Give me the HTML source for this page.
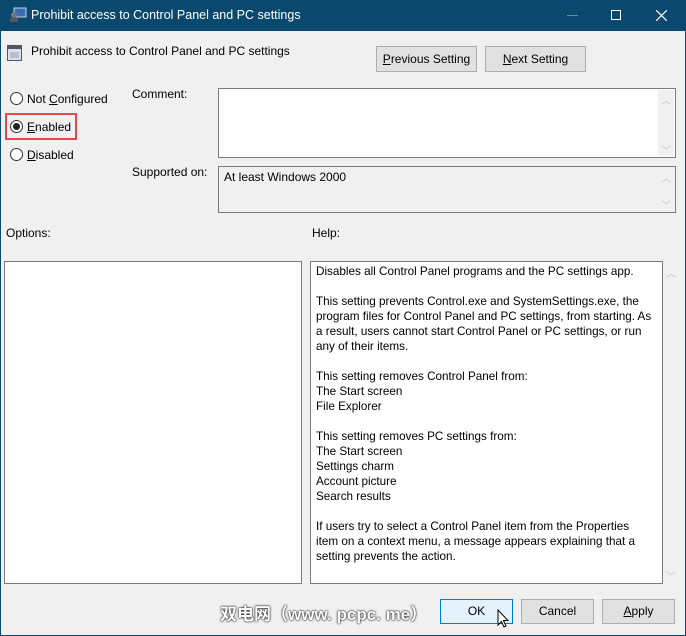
<!DOCTYPE html>
<html><head><style>
*{margin:0;padding:0;box-sizing:border-box}
body{width:686px;height:636px;overflow:hidden;background:#f0f0f0;font-family:"Liberation Sans","Noto Sans CJK SC",sans-serif;font-size:12px;color:#000;position:relative}
.a{position:absolute}
#frame{left:0;top:0;width:686px;height:636px;border:1px solid #0b4a6f;border-top:none}
#title{left:0;top:0;width:686px;height:31px;background:#0b486e;color:#fff;font-size:12.5px}
.btn{position:absolute;background:#e1e1e1;border:1px solid #adadad;text-align:center;line-height:23px}
.box{position:absolute;background:#fff;border:1px solid #7a7a7a}
.radio{position:absolute;width:13px;height:13px;border:1px solid #333;border-radius:50%;background:#fff}
u{text-decoration:underline}
.sb{position:absolute;color:#c0c0c0;font-size:10px}
</style></head><body>
<div class="a" id="title">
 <svg class="a" style="left:9px;top:7px" width="18" height="16"><rect x="5" y="1" width="12" height="9" fill="#3a6fb5" stroke="#ccd" /><circle cx="5" cy="8" r="3" fill="#777"/><rect x="1" y="11" width="8" height="4" fill="#556"/></svg>
 <span class="a" style="left:31px;top:8px">Prohibit access to Control Panel and PC settings</span>
 <div class="a" style="left:567px;top:15px;width:11px;height:1px;background:#6b8aa0"></div>
 <div class="a" style="left:611px;top:10px;width:10px;height:10px;border:1px solid #fff"></div>
 <svg class="a" style="left:656px;top:10px" width="11" height="11"><path d="M0 0L11 11M11 0L0 11" stroke="#fff" stroke-width="1.2"/></svg>
</div>
<div class="a" id="frame"></div>
<svg class="a" style="left:7px;top:45px" width="15" height="16"><rect x="0.5" y="0.5" width="14" height="15" fill="#dde" stroke="#556"/><rect x="1" y="1" width="13" height="3" fill="#556"/><rect x="3" y="7" width="9" height="6" fill="#bbc"/></svg>
<span class="a" style="left:31px;top:44px">Prohibit access to Control Panel and PC settings</span>
<div class="btn" style="left:376px;top:46px;width:101px;height:26px;line-height:24px"><u>P</u>revious Setting</div>
<div class="btn" style="left:485px;top:46px;width:101px;height:26px;line-height:24px"><u>N</u>ext Setting</div>

<div class="radio" style="left:10px;top:92px"></div><span class="a" style="left:27px;top:92px">Not <u>C</u>onfigured</span>
<div class="a" style="left:5px;top:113px;width:72px;height:27px;border:2px solid #e8474c"></div>
<div class="radio" style="left:10px;top:120px"></div><div class="a" style="left:13px;top:123px;width:7px;height:7px;border-radius:50%;background:#222"></div><span class="a" style="left:27px;top:120px"><u>E</u>nabled</span>
<div class="radio" style="left:10px;top:148px"></div><span class="a" style="left:27px;top:148px"><u>D</u>isabled</span>

<span class="a" style="left:132px;top:87px">Comment:</span>
<div class="box" style="left:218px;top:88px;width:458px;height:70px"></div>
<div class="a" style="left:658px;top:90px;width:16px;height:66px;background:#f0f0f0"></div>
<span class="sb" style="left:661px;top:92px">︿</span><span class="sb" style="left:661px;top:142px">﹀</span>
<span class="a" style="left:132px;top:165px">Supported on:</span>
<div class="a" style="left:218px;top:166px;width:458px;height:47px;border:1px solid #7a7a7a;background:#f0f0f0"></div>
<span class="a" style="left:224px;top:170px">At least Windows 2000</span>
<span class="sb" style="left:661px;top:170px">︿</span><span class="sb" style="left:661px;top:197px">﹀</span>

<span class="a" style="left:6px;top:226px">Options:</span>
<span class="a" style="left:312px;top:226px">Help:</span>
<div class="box" style="left:4px;top:261px;width:298px;height:323px"></div>
<div class="box" style="left:310px;top:261px;width:353px;height:323px;padding:2px 5px;line-height:15px;white-space:pre;font-size:11.7px">Disables all Control Panel programs and the PC settings app.

This setting prevents Control.exe and SystemSettings.exe, the
program files for Control Panel and PC settings, from starting. As
a result, users cannot start Control Panel or PC settings, or run
any of their items.

This setting removes Control Panel from:
The Start screen
File Explorer

This setting removes PC settings from:
The Start screen
Settings charm
Account picture
Search results

If users try to select a Control Panel item from the Properties
item on a context menu, a message appears explaining that a
setting prevents the action.</div>
<span class="sb" style="left:666px;top:265px">︿</span><span class="sb" style="left:666px;top:568px">﹀</span>

<span class="a" style="left:220px;top:600px;font-size:17px;font-weight:bold;color:#fff;text-shadow:0 0 2px #000,0 0 1px #000">双电网（www. pcpc. me）</span>
<div class="btn" style="left:440px;top:599px;width:73px;height:25px;background:#e5f1fb;border-color:#0078d7">OK</div>
<svg class="a" style="left:497px;top:609px" width="12" height="20"><path d="M1 1L1 16L4.5 12.5L7 18L9 17L6.5 11.5L11 11.5Z" fill="#fff" stroke="#000"/></svg>
<div class="btn" style="left:521px;top:599px;width:73px;height:25px">Cancel</div>
<div class="btn" style="left:602px;top:599px;width:73px;height:25px"><u>A</u>pply</div>
</body></html>
